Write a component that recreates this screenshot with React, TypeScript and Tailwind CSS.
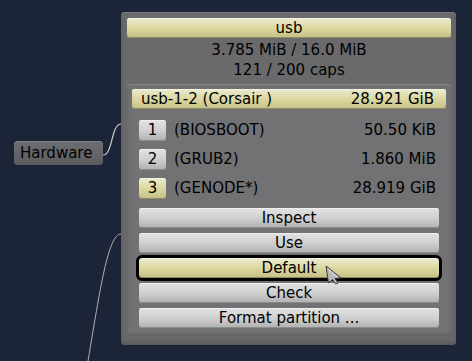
import type { ReactElement, ReactNode } from 'react'

const FONT = "font-['DejaVu_Sans','Liberation_Sans',sans-serif]"

const GRAY_BTN =
  'bg-gradient-to-b from-[#e2e2e2] via-[#d0d0d0] to-[#b0b0b0] shadow-[inset_0_-1px_0_#8c8c8c,inset_0_1px_0_#f0f0f0]'
const YELLOW_BTN =
  'bg-gradient-to-b from-[#ecebd2] via-[#dcd8a0] to-[#c4bf84] shadow-[inset_0_-1px_0_#8f8b5e,inset_0_1px_0_#f4f3e0]'

const partitions = [
  { num: '1', label: '(BIOSBOOT)', size: '50.50 KiB', selected: false },
  { num: '2', label: '(GRUB2)', size: '1.860 MiB', selected: false },
  { num: '3', label: '(GENODE*)', size: '28.919 GiB', selected: true }
]

const actions = ['Inspect', 'Use', 'Default', 'Check', 'Format partition ...']

function ActionButton({ children, focused }: { children: ReactNode; focused?: boolean }): ReactElement {
  return (
    <div className="h-[25px]">
      <div
        className={`h-[20px] rounded-[3px] flex items-center justify-center text-[15px] leading-none text-black ${
          focused ? `${YELLOW_BTN} outline-[3px] outline outline-black` : GRAY_BTN
        }`}
      >
        {children}
      </div>
    </div>
  )
}

function Cursor(): ReactElement {
  return (
    <svg className="absolute left-[325px] top-[265px]" width="18" height="20" viewBox="0 0 18 20">
      <path d="M1 1 L16 13 L10 13.5 L13 18 L10.5 19 L7.5 14.5 L3.5 18 Z" fill="#b8b8b8" stroke="#3a3a3a" strokeWidth="1" />
      <path d="M3 4 L12 12" stroke="#eeeeee" strokeWidth="1" />
    </svg>
  )
}

export default function App(): ReactElement {
  return (
    <div className={`relative w-[472px] h-[361px] overflow-hidden bg-[#1c2538] ${FONT}`}>
      {/* graph edges */}
      <svg className="absolute left-0 top-0" width="472" height="361" viewBox="0 0 472 361">
        <path d="M103 155 C113 155 111 124 121 124" fill="none" stroke="#c8c8c8" strokeWidth="1.2" />
        <path d="M121 234 C108 234 100 290 88 361" fill="none" stroke="#b0b0b0" strokeWidth="1" />
      </svg>

      <div className="absolute left-[14px] top-[141px] w-[89px] h-[24px] rounded-[4px] bg-gradient-to-b from-[#6e6f73] to-[#5a5b5f] shadow-[inset_0_1px_0_#7e7f84] flex items-center pl-[6px]">
        <span className="text-[15px] text-black">Hardware</span>
      </div>

      <div className="pl-[121px] pt-[12px]">
        <div className="w-[335px] h-[333px] rounded-[4px] bg-[#6a6a6c] shadow-[inset_0_1px_0_#7c7c7e,inset_0_-3px_4px_#5a5a5c] pt-[6px] pl-[6px] pr-[5px]">
          <div className={`h-[20px] rounded-[3px] flex items-center justify-center text-[15px] text-black ${YELLOW_BTN}`}>
            usb
          </div>
          <div className="flex flex-col items-center text-[15px] text-black leading-[20px] mt-[2px]">
            <div>3.785 MiB / 16.0 MiB</div>
            <div>121 / 200 caps</div>
          </div>

          <div className="mt-[4px] h-[252px] rounded-[4px] bg-[#727274] shadow-[inset_0_1px_0_#858587,inset_0_-2px_3px_#626264] pt-[5px] px-[5px]">
            <div className={`h-[20px] rounded-[3px] flex items-center justify-between pl-[9px] pr-[12px] text-[15px] text-black ${YELLOW_BTN}`}>
              <span>usb-1-2 (Corsair )</span>
              <span>28.921 GiB</span>
            </div>

            <div className="px-[7px] pt-[11px] flex flex-col gap-[8px]">
              {partitions.map((p) => (
                <div key={p.num} className="flex items-center h-[21px] text-[15px] text-black">
                  <div
                    className={`w-[27px] h-[21px] rounded-[3px] flex items-center justify-center ${
                      p.selected ? YELLOW_BTN : GRAY_BTN
                    }`}
                  >
                    {p.num}
                  </div>
                  <span className="ml-[8px] flex-1">{p.label}</span>
                  <span className="pr-[3px]">{p.size}</span>
                </div>
              ))}
            </div>

            <div className="px-[7px] pt-[9px] flex flex-col">
              {actions.map((a) => (
                <ActionButton key={a} focused={a === 'Default'}>
                  {a}
                </ActionButton>
              ))}
            </div>
          </div>
        </div>
      </div>

      <Cursor />
    </div>
  )
}
